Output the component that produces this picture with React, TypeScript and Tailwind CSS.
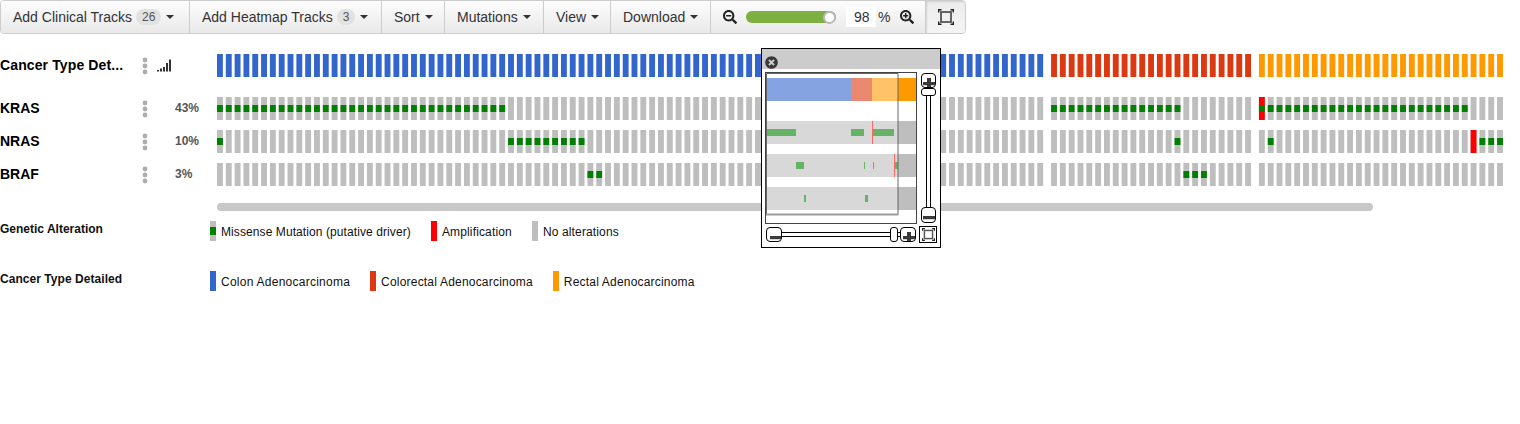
import { FaSearchMinus, FaSearchPlus, FaTimesCircle } from "react-icons/fa";

const P = 8.82;
const W = 5.88;
const GROUP_GAP = 5;
const COUNTS = [94, 23, 28];
const COLORS = ["#3366cc", "#dc3912", "#ff9900"];

function barX(group: number, i: number) {
  let x = 0;
  for (let g = 0; g < group; g++) x += COUNTS[g] * P + GROUP_GAP - 0;
  return x + i * P;
}

type Marks = { green: [number, number][]; red: [number, number][] };

function range(from: number, to: number, g: number): [number, number][] {
  const out: [number, number][] = [];
  for (let i = from; i <= to; i++) out.push([g, i]);
  return out;
}

const TRACKS: { name: string; pct: string; marks: Marks }[] = [
  {
    name: "KRAS",
    pct: "43%",
    marks: {
      green: [...range(0, 32, 0), ...range(0, 14, 1), ...range(0, 23, 2)],
      red: [[2, 0]],
    },
  },
  {
    name: "NRAS",
    pct: "10%",
    marks: {
      green: [[0, 0], ...range(33, 41, 0), [1, 14], [2, 1], ...range(25, 27, 2)],
      red: [[2, 24]],
    },
  },
  {
    name: "BRAF",
    pct: "3%",
    marks: { green: [...range(42, 43, 0), ...range(15, 17, 1)], red: [] },
  },
];

function Bars({ colored, marks }: { colored?: boolean; marks?: Marks }) {
  return (
    <svg width="1290" height="23" viewBox="0 0 1290 23" className="block shrink-0">
      {COUNTS.map((n, g) =>
        Array.from({ length: n }, (_, i) => (
          <rect key={`${g}-${i}`} x={barX(g, i)} y="0" width={W} height="23" fill={colored ? COLORS[g] : "#bebebe"} />
        ))
      )}
      {marks?.red.map(([g, i]) => (
        <rect key={`r${g}-${i}`} x={barX(g, i)} y="0" width={W} height="23" fill="#ff0000" />
      ))}
      {marks?.green.map(([g, i]) => (
        <rect key={`g${g}-${i}`} x={barX(g, i)} y="8" width={W} height="7" fill="#008000" />
      ))}
    </svg>
  );
}

function Dots() {
  return (
    <svg width="6" height="18" viewBox="0 0 6 18" className="block shrink-0">
      <circle cx="3" cy="3" r="2.4" fill="#adadad" />
      <circle cx="3" cy="9" r="2.4" fill="#adadad" />
      <circle cx="3" cy="15" r="2.4" fill="#adadad" />
    </svg>
  );
}

function Caret() {
  return <span className="ml-[5px] inline-block h-0 w-0 border-x-[4px] border-t-[4px] border-x-transparent border-t-[#333]" />;
}

function Badge({ children }: { children: string }) {
  return (
    <span className="ml-[4px] flex h-[16px] items-center justify-center rounded-[8px] bg-[#e2e2e2] px-[6px] text-[12px] leading-[16px] text-[#555]">
      {children}
    </span>
  );
}

const btn =
  "flex h-full items-center border-r border-[#ccc] text-[14px] text-[#333] bg-gradient-to-b from-[#fdfdfd] to-[#e9e9e9]";

function FitIcon({ size = 16 }: { size?: number }) {
  return (
    <svg width={size} height={size} viewBox="0 0 16 16" className="block">
      <rect x="3" y="3" width="10" height="10" fill="none" stroke="#555" strokeWidth="1.8" />
      <path d="M0.7 3.5V0.7H3.5M12.5 0.7H15.3V3.5M15.3 12.5V15.3H12.5M3.5 15.3H0.7V12.5" fill="none" stroke="#222" strokeWidth="1.4" />
    </svg>
  );
}

function Toolbar() {
  return (
    <div className="flex h-[34px] w-[966px] overflow-hidden rounded-[4px] border border-[#ccc]">
      <div className={`${btn} w-[189px] pl-[12px]`}>
        Add Clinical Tracks
        <Badge>26</Badge>
        <Caret />
      </div>
      <div className={`${btn} w-[192px] pl-[12px]`}>
        Add Heatmap Tracks
        <Badge>3</Badge>
        <Caret />
      </div>
      <div className={`${btn} w-[63px] pl-[12px]`}>
        Sort
        <Caret />
      </div>
      <div className={`${btn} w-[99px] pl-[12px]`}>
        Mutations
        <Caret />
      </div>
      <div className={`${btn} w-[67px] pl-[12px]`}>
        View
        <Caret />
      </div>
      <div className={`${btn} w-[100px] pl-[12px]`}>
        Download
        <Caret />
      </div>
      <div className={`${btn} w-[215px] pl-[12px]`}>
        <FaSearchMinus className="h-[14px] w-[14px] text-[#222]" />
        <div className="ml-[9px] flex h-[12px] w-[90px] items-center justify-end rounded-[6px] bg-[#7cb040]">
          <span className="block h-[13px] w-[13px] rounded-full border-2 border-[#bbb] bg-white" />
        </div>
        <div className="ml-[10px] h-[20px] w-[30px] bg-white pl-[8px] leading-[20px]">98</div>
        <span className="ml-[2px]">%</span>
        <FaSearchPlus className="ml-[10px] h-[14px] w-[14px] text-[#222]" />
      </div>
      <div className="flex h-full flex-1 items-center justify-center bg-gradient-to-b from-[#ececec] to-[#f4f4f4] shadow-[inset_1px_1px_2px_rgba(0,0,0,0.12)]">
        <FitIcon />
      </div>
    </div>
  );
}

function TrackRow({
  name,
  pct,
  children,
  icon,
}: {
  name: string;
  pct?: string;
  children: React.ReactNode;
  icon?: boolean;
}) {
  return (
    <div className="flex h-[23px] items-center">
      <div className={`w-[142px] shrink-0 whitespace-nowrap text-[14px] font-bold leading-[23px] text-black ${icon ? "tracking-[0.12px]" : ""}`}>
        {name}
      </div>
      <Dots />
      <div className="w-[69px] shrink-0 pb-[1px] pl-[27px] text-[12px] font-bold leading-[20px] text-[#555]">
        {pct}
        {icon && (
          <svg width="15" height="13" viewBox="0 0 15 13" className="-ml-[18px] block">
            <rect x="0" y="11" width="2" height="1.5" fill="#333" />
            <rect x="3" y="9.5" width="2" height="3" fill="#333" />
            <rect x="6" y="8" width="2" height="4.5" fill="#333" />
            <rect x="9" y="4" width="2" height="8.5" fill="#333" />
            <rect x="12" y="0.5" width="2" height="12" fill="#333" />
          </svg>
        )}
      </div>
      {children}
    </div>
  );
}

function Legend({
  title,
  titleClass,
  items,
}: {
  title: string;
  titleClass?: string;
  items: { label: string; color: string; green?: boolean; cls: string }[];
}) {
  return (
    <div className="flex h-[20px] items-start">
      <div className={`w-[210px] shrink-0 pt-[1px] text-[12px] font-bold leading-[14px] text-[#111] ${titleClass ?? ""}`}>{title}</div>
      {items.map((it) => (
        <div key={it.label} className={`flex items-start ${it.cls}`}>
          <span className="relative block h-[20px] w-[6px]" style={{ backgroundColor: it.color }}>
            {it.green && <span className="absolute left-0 top-[6px] block h-[8px] w-[6px] bg-[#008000]" />}
          </span>
          <span className="ml-[5px] whitespace-nowrap pt-[1px] text-[12px] leading-[20px] text-[#111]">{it.label}</span>
        </div>
      ))}
    </div>
  );
}

function StepButton({ plus, className, dx = 0 }: { plus?: boolean; className: string; dx?: number }) {
  return (
    <div className={`shrink-0 overflow-hidden rounded-[4px] border border-black bg-white ${className}`}>
      <svg width="14" height="14" viewBox="0 0 14 14" className="block overflow-visible">
        <g transform={`translate(${dx} 0)`} fill="#3a3a3a">
          <rect x="1" y="8" width="12" height="3.2" />
          {plus && <rect x="5" y="4" width="4" height="10" />}
        </g>
      </svg>
    </div>
  );
}

function Minimap() {
  return (
    <svg width="150" height="150" viewBox="0 0 150 150" className="block">
      <rect x="0" y="5" width="85" height="23" fill="#3366cc" />
      <rect x="85" y="5" width="21" height="23" fill="#dc3912" />
      <rect x="106" y="5" width="45" height="23" fill="#ff9900" />
      {[48, 81, 114].map((y) => (
        <rect key={y} x="0" y={y} width="150" height="23" fill="#bebebe" />
      ))}
      <g fill="#008000">
        <rect x="0" y="56" width="30" height="7" />
        <rect x="85" y="56" width="13" height="7" />
        <rect x="106" y="56" width="22" height="7" />
        <rect x="0" y="89" width="1" height="7" />
        <rect x="30" y="89" width="8" height="7" />
        <rect x="98" y="89" width="1" height="7" />
        <rect x="107" y="89" width="1" height="7" />
        <rect x="129" y="89" width="3" height="7" />
        <rect x="38" y="122" width="2" height="7" />
        <rect x="99" y="122" width="3" height="7" />
      </g>
      <rect x="106" y="48" width="1" height="23" fill="#ff0000" />
      <rect x="128" y="81" width="1" height="23" fill="#ff0000" />
      <rect x="0" y="0" width="132" height="142" fill="#ffffff" fillOpacity="0.4" />
      <path d="M0.5 0.5H132V141" fill="none" stroke="#666" strokeWidth="1" />
      <path d="M0.5 0.5V141" fill="none" stroke="#666" strokeWidth="1" />
      <path d="M0 141.5H132.5" fill="none" stroke="#999" strokeWidth="2" />
    </svg>
  );
}

function MinimapPanel() {
  return (
    <div className="absolute left-[761px] top-[48px] h-[200px] w-[180px] border border-black bg-white">
      <div className="flex h-[20px] items-center bg-[#cccccc] pl-[3px] pt-[6px]">
        <FaTimesCircle className="h-[13px] w-[13px] text-[#3a3a3a]" />
      </div>
      <div className="flex">
        <div className="ml-[3px] mt-[3px] h-[152px] w-[152px] border border-[#444] bg-white">
          <Minimap />
        </div>
        <div className="ml-[4px] mt-[4px] flex h-[150px] w-[15px] flex-col items-center">
          <StepButton plus className="h-[15px] w-[15px]" />
          <div className="h-[8px] w-[15px] shrink-0 rounded-[3px] border border-black bg-white" />
          <div className="w-[5px] flex-1 border-x border-black bg-white" />
          <StepButton className="h-[16px] w-[15px]" />
        </div>
      </div>
      <div className="ml-[4px] mt-[2px] flex items-center">
        <StepButton dx={2} className="h-[15px] w-[16px]" />
        <div className="h-[5px] w-[108px] border-y border-black" />
        <div className="h-[15px] w-[8px] shrink-0 rounded-[3px] border border-black bg-white" />
        <div className="h-[5px] w-[2px] border-y border-black" />
        <StepButton plus dx={1} className="h-[15px] w-[16px]" />
        <div className="ml-[3px] flex h-[17px] w-[18px] items-center justify-center border border-black bg-white">
          <FitIcon size={13} />
        </div>
      </div>
    </div>
  );
}

export default function App() {
  return (
    <div className="relative h-[424px] w-[1520px] overflow-hidden bg-white font-['Liberation_Sans',Arial,sans-serif]">
      <Toolbar />
      <div className="mt-[20px] flex flex-col">
        <TrackRow name="Cancer Type Det..." icon>
          <Bars colored />
        </TrackRow>
        <div className="mt-[20px] flex flex-col gap-[10px]">
          {TRACKS.map((t) => (
            <TrackRow key={t.name} name={t.name} pct={t.pct}>
              <Bars marks={t.marks} />
            </TrackRow>
          ))}
        </div>
        <div className="ml-[217px] mt-[17px] h-[8px] w-[1156px] rounded-[4px] bg-[#c8c8c8]" />
      </div>
      <div className="mt-[10px] flex flex-col gap-[30px]">
        <Legend
          title="Genetic Alteration"
          items={[
            { label: "Missense Mutation (putative driver)", color: "#bebebe", green: true, cls: "mr-[20px] tracking-[0.09px]" },
            { label: "Amplification", color: "#ff0000", cls: "mr-[20px] tracking-[0.15px]" },
            { label: "No alterations", color: "#bebebe", cls: "tracking-[0.14px]" },
          ]}
        />
        <Legend
          title="Cancer Type Detailed"
          titleClass="tracking-[0.05px]"
          items={[
            { label: "Colon Adenocarcinoma", color: "#3366cc", cls: "mr-[20px] tracking-[0.25px]" },
            { label: "Colorectal Adenocarcinoma", color: "#dc3912", cls: "mr-[20px] tracking-[0.2px]" },
            { label: "Rectal Adenocarcinoma", color: "#ff9900", cls: "tracking-[0.19px]" },
          ]}
        />
      </div>
      <MinimapPanel />
    </div>
  );
}
